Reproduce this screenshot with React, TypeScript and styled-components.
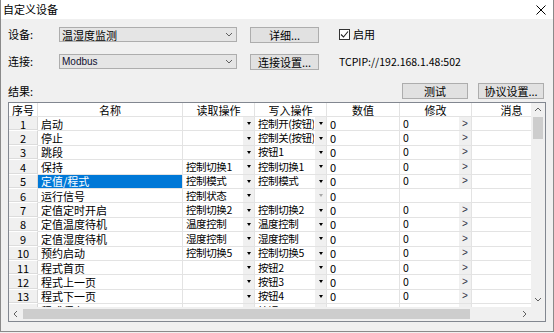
import React from "react";
import styled, { createGlobalStyle } from "styled-components";

const FONT = `"Noto Sans CJK SC", "Liberation Sans", sans-serif`;

const GlobalStyle = createGlobalStyle`
  html, body { margin: 0; padding: 0; background: #f0f0f0; }
  * { box-sizing: border-box; }
`;

interface Row {
  no: number;
  name: string;
  read: string;
  write: string | null;
  value: string;
  modify: string | null;
  selected?: boolean;
}

const rows: Row[] = [
  { no: 1, name: "启动", read: "", write: "控制开(按钮)", value: "0", modify: "0" },
  { no: 2, name: "停止", read: "", write: "控制关(按钮)", value: "0", modify: "0" },
  { no: 3, name: "跳段", read: "", write: "按钮1", value: "0", modify: "0" },
  { no: 4, name: "保持", read: "控制切换1", write: "控制切换1", value: "0", modify: "0" },
  { no: 5, name: "定值/程式", read: "控制模式", write: "控制模式", value: "0", modify: "0", selected: true },
  { no: 6, name: "运行信号", read: "控制状态", write: null, value: "0", modify: null },
  { no: 7, name: "定值定时开启", read: "控制切换2", write: "控制切换2", value: "0", modify: "0" },
  { no: 8, name: "定值温度待机", read: "温度控制", write: "温度控制", value: "0", modify: "0" },
  { no: 9, name: "定值湿度待机", read: "湿度控制", write: "湿度控制", value: "0", modify: "0" },
  { no: 10, name: "预约启动", read: "控制切换5", write: "控制切换5", value: "0", modify: "0" },
  { no: 11, name: "程式首页", read: "", write: "按钮2", value: "0", modify: "0" },
  { no: 12, name: "程式上一页", read: "", write: "按钮3", value: "0", modify: "0" },
  { no: 13, name: "程式下一页", read: "", write: "按钮4", value: "0", modify: "0" },
  { no: 14, name: "程式保存", read: "", write: "按钮5", value: "0", modify: "0" },
];

const headers = ["序号", "名称", "读取操作", "写入操作", "数值", "修改", "消息"];
const GRID = "29px 145px 72px 72px 73px 72px 80px";

const Chevron: React.FC<{ dir: "up" | "down" | "left" | "right"; color?: string }> = ({ dir, color = "#606060" }) => {
  const pts = {
    up: "1,5 4,2 7,5",
    down: "1,2 4,5 7,2",
    left: "5,1 2,4 5,7",
    right: "3,1 6,4 3,7",
  }[dir];
  return (
    <svg width="8" height="8" viewBox="0 0 8 8">
      <polyline points={pts} fill="none" stroke={color} strokeWidth="1" />
    </svg>
  );
};

const App: React.FC = () => {
  return (
    <>
      <GlobalStyle />
      <Window>
        <TitleBar>
          <Title>自定义设备</Title>
          <svg width="10" height="10" viewBox="0 0 10 10">
            <path d="M0.5 0.5 L9.5 9.5 M9.5 0.5 L0.5 9.5" stroke="#000" strokeWidth="1" />
          </svg>
        </TitleBar>
        <Body>
          <FormRow>
            <Label>设备:</Label>
            <Combo>
              <span>温湿度监测</span>
              <Chevron dir="down" />
            </Combo>
            <Button $w={69}>详细...</Button>
            <CheckWrap>
              <CheckBox>
                <svg width="9" height="9" viewBox="0 0 9 9">
                  <polyline points="1,4.5 3.5,7 8,1.5" fill="none" stroke="#222" strokeWidth="1.1" />
                </svg>
              </CheckBox>
              启用
            </CheckWrap>
          </FormRow>
          <FormRow $gap={12}>
            <Label>连接:</Label>
            <Combo>
              <LatinText>Modbus</LatinText>
              <Chevron dir="down" />
            </Combo>
            <Button $w={69}>连接设置...</Button>
            <Info>TCPIP://192.168.1.48:502</Info>
          </FormRow>
          <ResultRow>
            <Label>结果:</Label>
            <Spacer />
            <Button $w={66}>测试</Button>
            <Button $w={66}>协议设置...</Button>
          </ResultRow>
          <TableFrame>
            <GridArea>
              <HeaderRow>
                {headers.map((h) => (
                  <HeaderCell key={h}>{h}</HeaderCell>
                ))}
              </HeaderRow>
              {rows.map((r) => (
                <DataRow key={r.no}>
                  <NumCell>{r.no}</NumCell>
                  <Cell $selected={r.selected}>{r.name}</Cell>
                  <Cell>
                    <CellText>{r.read}</CellText>
                    <DropBtn>
                      <Tri />
                    </DropBtn>
                  </Cell>
                  <Cell>
                    <CellText>{r.write ?? ""}</CellText>
                    <DropBtn>
                      <Tri $disabled={r.write === null} />
                    </DropBtn>
                  </Cell>
                  <Cell>{r.value}</Cell>
                  <Cell>
                    <CellText>{r.modify ?? ""}</CellText>
                    {r.modify !== null && <ModBtn>&gt;</ModBtn>}
                  </Cell>
                  <Cell />
                </DataRow>
              ))}
            </GridArea>
            <VScroll>
              <ArrowBox>
                <Chevron dir="up" />
              </ArrowBox>
              <VTrack>
                <VThumb />
              </VTrack>
              <ArrowBox>
                <Chevron dir="down" />
              </ArrowBox>
            </VScroll>
            <HScroll>
              <ArrowBox>
                <Chevron dir="left" />
              </ArrowBox>
              <HTrack>
                <HThumb />
              </HTrack>
              <ArrowBox>
                <Chevron dir="right" />
              </ArrowBox>
            </HScroll>
            <Corner />
          </TableFrame>
        </Body>
      </Window>
    </>
  );
};

export default App;

const Window = styled.div`
  width: 554px;
  height: 332px;
  border: 1px solid #8a8a8a;
  border-top: none;
  background: #f0f0f0;
  display: flex;
  flex-direction: column;
  font-family: ${FONT};
  font-size: 11px;
  color: #000;
`;

const TitleBar = styled.div`
  height: 19px;
  background: #fff;
  display: flex;
  align-items: center;
  justify-content: space-between;
  padding: 0 7px 0 2px;
`;

const Title = styled.div`
  font-size: 11px;
  line-height: 13px;
`;

const Body = styled.div`
  flex: 1;
  padding: 8px 0 0 7px;
  display: flex;
  flex-direction: column;
`;

const FormRow = styled.div<{ $gap?: number }>`
  display: flex;
  align-items: center;
  height: 15px;
  margin-top: ${(p) => p.$gap ?? 0}px;
`;

const Label = styled.div`
  width: 51px;
  line-height: 13px;
`;

const Combo = styled.div`
  width: 178px;
  height: 15px;
  margin-right: 13px;
  border: 1px solid #adadad;
  background: #e5e5e5;
  display: flex;
  align-items: center;
  justify-content: space-between;
  padding: 0 3px 0 2px;
  line-height: 12px;
`;

const LatinText = styled.span`
  font-family: "Liberation Sans", sans-serif;
  font-size: 10px;
  color: #101030;
`;

const Button = styled.div<{ $w: number }>`
  width: ${(p) => p.$w}px;
  height: 16px;
  border: 1px solid #adadad;
  background: #e1e1e1;
  display: flex;
  align-items: center;
  justify-content: center;
  line-height: 12px;
`;

const CheckWrap = styled.div`
  margin-left: 20px;
  display: flex;
  align-items: center;
  gap: 3px;
  line-height: 13px;
`;

const CheckBox = styled.div`
  width: 11px;
  height: 11px;
  border: 1px solid #333;
  background: #fff;
  display: flex;
  align-items: center;
  justify-content: center;
`;

const Info = styled.div`
  margin-left: 20px;
  font-size: 10.5px;
  line-height: 12px;
`;

const ResultRow = styled.div`
  display: flex;
  align-items: center;
  height: 16px;
  margin-top: 14px;
  padding-right: 9px;
  gap: 10px;
`;

const Spacer = styled.div`
  flex: 1;
`;

const TableFrame = styled.div`
  margin-top: 3px;
  width: 538px;
  height: 220px;
  border: 1px solid #828790;
  background: #fff;
  display: grid;
  grid-template-columns: 522px 14px;
  grid-template-rows: 204px 14px;
`;

const GridArea = styled.div`
  overflow: hidden;
  background: #fff;
`;

const HeaderRow = styled.div`
  display: grid;
  grid-template-columns: ${GRID};
  height: 14px;
  border-bottom: 1px solid #e3e3e3;
`;

const HeaderCell = styled.div`
  border-right: 1px solid #e3e3e3;
  display: flex;
  align-items: center;
  justify-content: center;
  line-height: 12px;
`;

const DataRow = styled.div`
  display: grid;
  grid-template-columns: ${GRID};
  height: 14.4px;
`;

const NumCell = styled.div`
  background: #f0f0f0;
  border-right: 1px solid #d8d8d8;
  border-bottom: 1px solid #fff;
  box-shadow: inset 0 -1px 0 #dcdcdc;
  display: flex;
  align-items: center;
  justify-content: center;
  line-height: 12px;
`;

const Cell = styled.div<{ $selected?: boolean }>`
  display: flex;
  align-items: center;
  overflow: hidden;
  white-space: nowrap;
  padding-left: 3px;
  line-height: 12px;
  border-right: 1px solid #e3e3e3;
  border-bottom: 1px solid #e3e3e3;
  background: ${(p) => (p.$selected ? "#0078d7" : "#fff")};
  color: ${(p) => (p.$selected ? "#fff" : "#000")};
`;

const CellText = styled.span`
  flex: 1;
  overflow: hidden;
  font-size: 10.5px;
  letter-spacing: -0.4px;
`;

const DropBtn = styled.div`
  width: 12px;
  height: 100%;
  background: #f0f0f0;
  border-left: 1px solid #fff;
  display: flex;
  align-items: center;
  justify-content: center;
`;

const Tri = styled.div<{ $disabled?: boolean }>`
  width: 0;
  height: 0;
  border-left: 2.5px solid transparent;
  border-right: 2.5px solid transparent;
  border-top: 3px solid ${(p) => (p.$disabled ? "#a8a8a8" : "#000")};
`;

const ModBtn = styled.div`
  width: 13px;
  height: 100%;
  background: #f0f0f0;
  border-left: 1px solid #fff;
  display: flex;
  align-items: center;
  justify-content: center;
  font-family: "Liberation Sans", sans-serif;
  font-size: 10px;
  color: #334;
`;

const VScroll = styled.div`
  background: #f0f0f0;
  display: flex;
  flex-direction: column;
`;

const ArrowBox = styled.div`
  width: 14px;
  height: 14px;
  flex: none;
  display: flex;
  align-items: center;
  justify-content: center;
`;

const VTrack = styled.div`
  flex: 1;
  padding: 0 2px;
`;

const VThumb = styled.div`
  height: 22px;
  background: #cdcdcd;
`;

const HScroll = styled.div`
  background: #f0f0f0;
  display: flex;
  align-items: center;
`;

const HTrack = styled.div`
  flex: 1;
  height: 100%;
  padding: 2px 0;
`;

const HThumb = styled.div`
  width: 447px;
  height: 100%;
  background: #cdcdcd;
`;

const Corner = styled.div`
  background: #f0f0f0;
`;
